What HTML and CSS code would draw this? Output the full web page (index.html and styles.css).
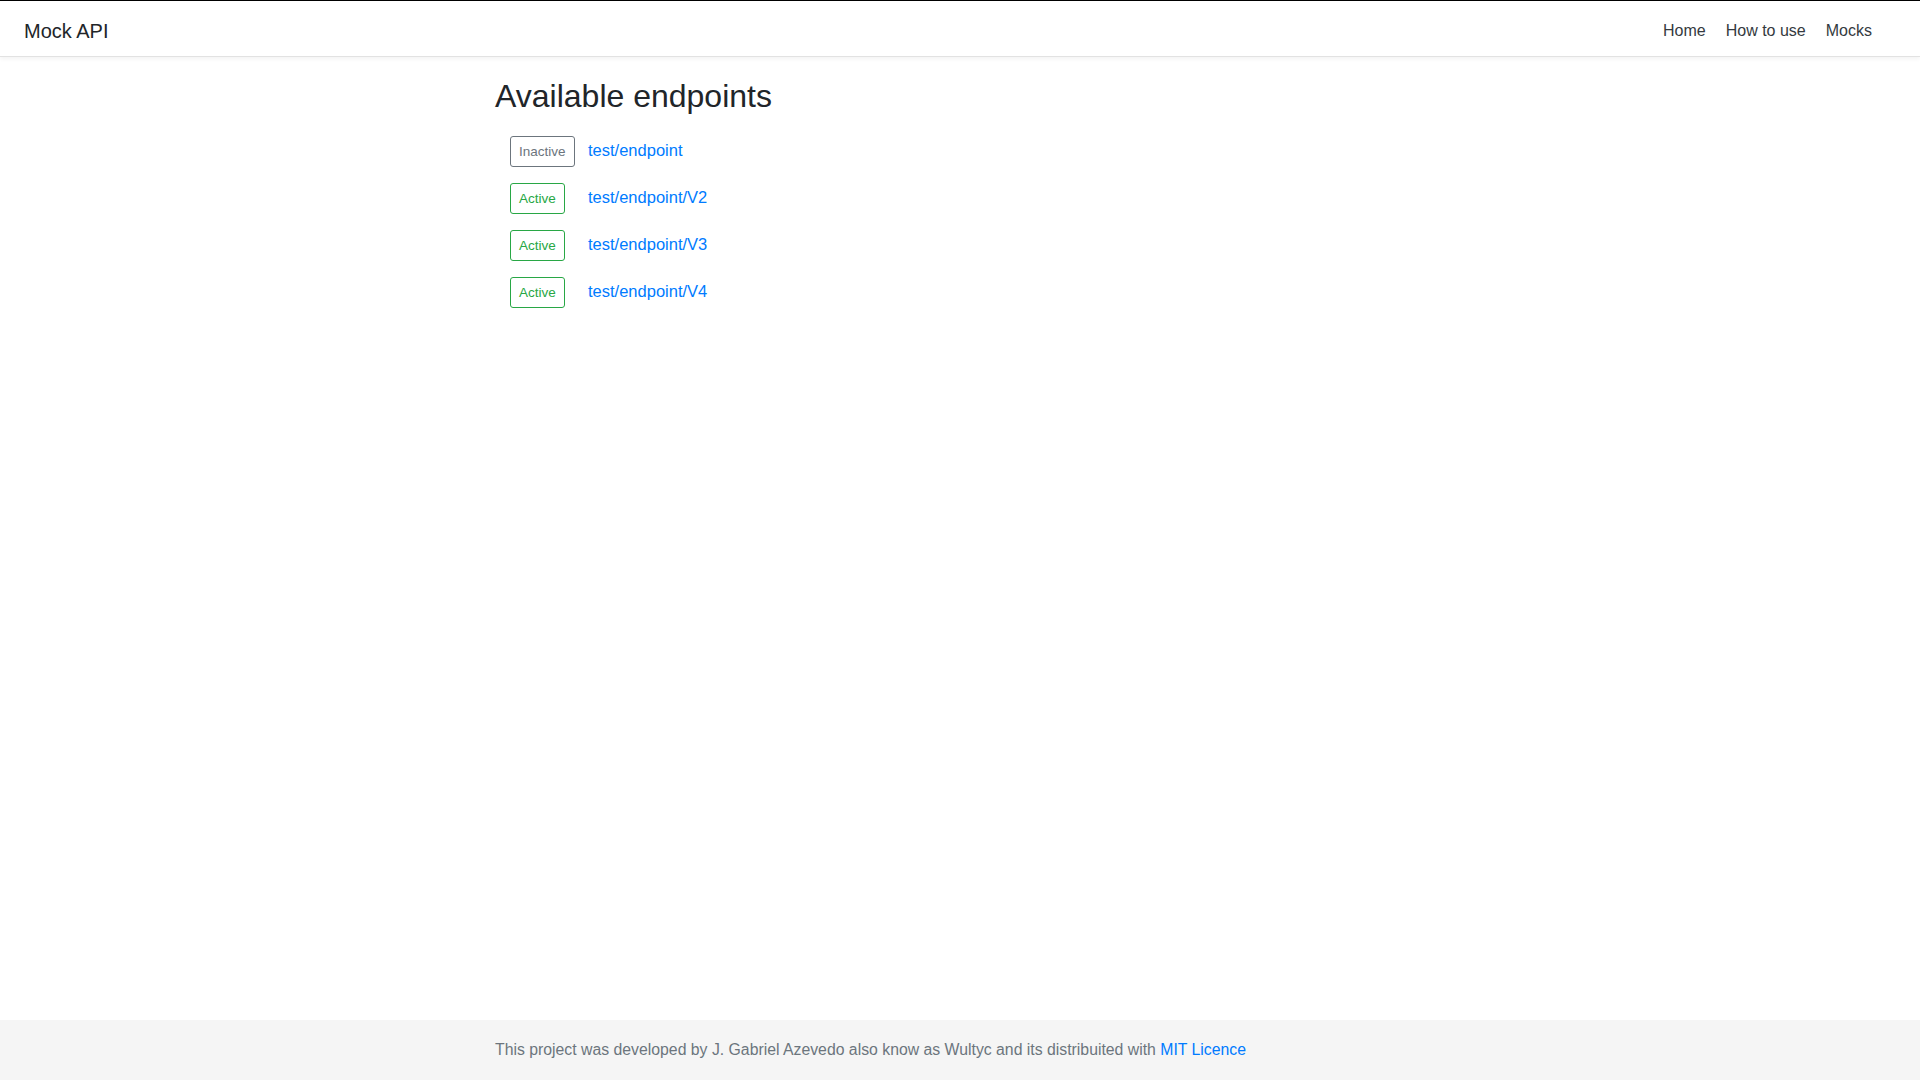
FILE: index.html
```html
<!DOCTYPE html>
<html lang="en">
<head>
<meta charset="utf-8">
<title>Mock API</title>
<link rel="stylesheet" href="styles.css">
</head>
<body>
<div class="page">
  <header class="navbar">
    <a class="brand" href="#">Mock API</a>
    <nav class="nav">
      <a class="nav-link" href="#">Home</a>
      <a class="nav-link" href="#">How to use</a>
      <a class="nav-link" href="#">Mocks</a>
    </nav>
  </header>
  <main class="container main">
    <h2 class="title">Available endpoints</h2>
    <ul class="endpoints">
      <li class="endpoint">
        <span class="status"><span class="btn btn-secondary">Inactive</span></span>
        <a class="endpoint-link" href="#">test/endpoint</a>
      </li>
      <li class="endpoint">
        <span class="status"><span class="btn btn-success">Active</span></span>
        <a class="endpoint-link" href="#">test/endpoint/V2</a>
      </li>
      <li class="endpoint">
        <span class="status"><span class="btn btn-success">Active</span></span>
        <a class="endpoint-link" href="#">test/endpoint/V3</a>
      </li>
      <li class="endpoint">
        <span class="status"><span class="btn btn-success">Active</span></span>
        <a class="endpoint-link" href="#">test/endpoint/V4</a>
      </li>
    </ul>
  </main>
  <footer class="footer">
    <div class="container">
      <span class="footer-text">This project was developed by J. Gabriel Azevedo also know as Wultyc and its distribuited with <a href="#" class="footer-link">MIT Licence</a></span>
    </div>
  </footer>
</div>
</body>
</html>
```

FILE: styles.css
```css
* {
  box-sizing: border-box;
}

html, body {
  margin: 0;
  padding: 0;
}

body {
  font-family: "Liberation Sans", Arial, sans-serif;
  font-size: 16px;
  line-height: 1.5;
  color: #212529;
  background: #fff;
}

a {
  text-decoration: none;
}

.page {
  display: flex;
  flex-direction: column;
  min-height: 100vh;
}

.navbar {
  display: flex;
  align-items: flex-start;
  justify-content: space-between;
  height: 57px;
  padding: 15px 38px 0 24px;
  border-top: 1px solid #000;
  border-bottom: 1px solid #e2e2e2;
  box-shadow: 0 2px 4px rgba(0, 0, 0, 0.05);
  background: #fff;
  position: relative;
  z-index: 1;
}

.brand {
  font-size: 20px;
  line-height: 30px;
  color: #212529;
}

.nav {
  display: flex;
  margin-top: 3px;
}

.nav-link {
  padding: 0 10px;
  font-size: 16px;
  line-height: 24px;
  color: #343a40;
}

.container {
  width: 960px;
  margin: 0 auto;
  padding: 0 15px;
}

.main {
  padding-top: 20px;
  flex: 1;
}

.title {
  margin: 0 0 8px;
  font-size: 32px;
  font-weight: 400;
  line-height: 1.2;
  color: #212529;
}

.endpoints {
  list-style: none;
  margin: 0;
  padding: 13px 0 0 15px;
  display: flex;
  flex-direction: column;
  gap: 16px;
}

.endpoint {
  display: grid;
  grid-template-columns: 78px auto;
  align-items: start;
}

.status {
  display: flex;
}

.btn {
  display: inline-block;
  padding: 4px 8px;
  font-size: 13.5px;
  line-height: 21px;
  border: 1px solid;
  border-radius: 3px;
  background: #fff;
}

.btn-secondary {
  color: #6c757d;
  border-color: #6c757d;
}

.btn-success {
  color: #28a745;
  border-color: #28a745;
}

.endpoint-link {
  justify-self: start;
  padding-top: 2px;
  font-size: 16.5px;
  line-height: 24px;
  color: #007bff;
}

.footer {
  height: 60px;
  background: #f5f5f5;
  line-height: 60px;
}

.footer-text {
  color: #6c757d;
  font-size: 15.8px;
}

.footer-link {
  color: #007bff;
}
```
